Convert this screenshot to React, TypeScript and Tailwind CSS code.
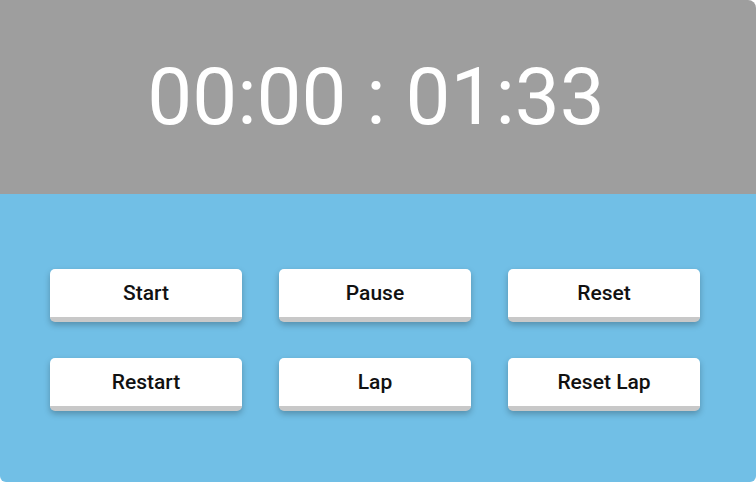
const buttons = ['Start', 'Pause', 'Reset', 'Restart', 'Lap', 'Reset Lap']

export default function App() {
  return (
    <div className="w-[756px] h-[482px] overflow-hidden rounded-tr-[8px] rounded-b-[6px] font-['Roboto',sans-serif]">
      <div className="h-[194px] bg-[#9e9e9e] flex items-center justify-center">
        <span className="text-[80px] font-normal text-white leading-none pr-[4px]">
          00:00 : 01:33
        </span>
      </div>
      <div className="h-[288px] bg-[#71bfe6] pt-[75px] pl-[50px]">
        <div className="grid grid-cols-[192px_192px_192px] gap-x-[37px] gap-y-[36px]">
          {buttons.map((label) => (
            <button
              key={label}
              type="button"
              className="h-[53px] bg-white rounded-[5px] border-b-[5px] border-[#c8c8c8] shadow-[0_3px_6px_rgba(0,0,0,0.25)] text-[21px] font-medium text-[#111] leading-none"
            >
              {label}
            </button>
          ))}
        </div>
      </div>
    </div>
  )
}
